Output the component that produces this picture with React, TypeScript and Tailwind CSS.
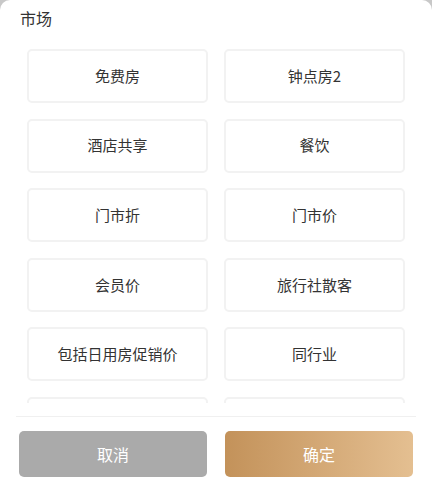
const options = [
  "免费房",
  "钟点房2",
  "酒店共享",
  "餐饮",
  "门市折",
  "门市价",
  "会员价",
  "旅行社散客",
  "包括日用房促销价",
  "同行业",
  "",
  "",
];

export default function App() {
  return (
    <div className="h-[489px] w-[432px] overflow-hidden bg-[#c8c8c8]" style={{ fontFamily: '"Noto Sans CJK SC", "Noto Sans", sans-serif' }}>
      <div className="flex h-full flex-col rounded-t-[10px] bg-white">
        <div className="h-[49px] pl-[20px] pt-[8px] text-[16px] leading-[20px] text-[#333]">市场</div>
        <div className="h-[354px] overflow-hidden px-[27px]">
          <div className="grid grid-cols-2 gap-x-[16px] gap-y-[15.6px]">
            {options.map((o, i) => (
              <div
                key={i}
                className="flex h-[54px] items-center justify-center rounded-[5px] border-2 border-[#f2f2f2] text-[15px] text-[#333]"
              >
                {o}
              </div>
            ))}
          </div>
        </div>
        <div className="mx-[16px] mt-[13px] h-px bg-[#f0f0f0]" />
        <div className="mt-[14px] flex gap-[18px] px-[19px]">
          <button className="flex h-[46px] flex-1 items-center justify-center rounded-[5px] bg-[#aaaaaa] text-[16px] text-white">
            取消
          </button>
          <button className="flex h-[46px] flex-1 items-center justify-center rounded-[5px] bg-gradient-to-r from-[#c3925a] to-[#e4bf91] text-[16px] text-white">
            确定
          </button>
        </div>
      </div>
    </div>
  );
}
